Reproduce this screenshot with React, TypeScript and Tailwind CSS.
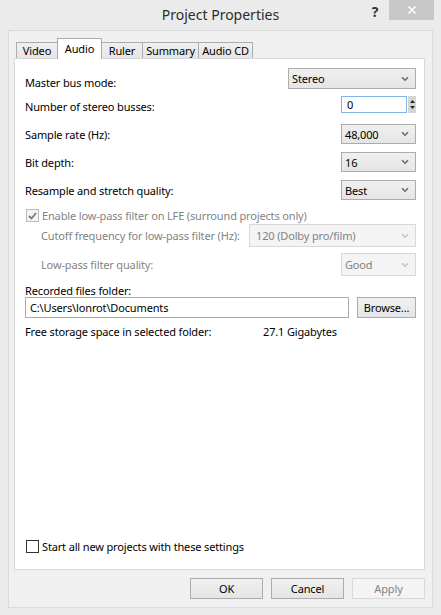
import React from 'react';

const tabs = [
  { label: 'Video', w: 'w-[42px]' },
  { label: 'Audio', w: 'w-[45px]', active: true },
  { label: 'Ruler', w: 'w-[42px]' },
  { label: 'Summary', w: 'w-[57px]' },
  { label: 'Audio CD', w: 'w-[55px]' },
];

function Chevron({ disabled }: { disabled?: boolean }) {
  return (
    <svg width="8" height="6" viewBox="0 0 8 6" className="shrink-0">
      <path
        d="M1 1.2 L4 4.2 L7 1.2"
        fill="none"
        stroke={disabled ? '#c4c4c4' : '#6b6b6b'}
        strokeWidth="1.6"
      />
    </svg>
  );
}

function Select({ value, className = '', disabled }: { value: string; className?: string; disabled?: boolean }) {
  return (
    <div
      className={`flex items-center justify-between pr-[6px] border ${
        disabled
          ? 'h-[23px] border-[#d9d9d9] bg-[#f4f4f4] text-[#838383]'
          : 'h-[20px] pl-[3px] border-[#acacac] bg-gradient-to-b from-[#f0f0f0] to-[#e5e5e5] text-black'
      } ${className}`}
    >
      <span>{value}</span>
      <Chevron disabled={disabled} />
    </div>
  );
}

function Button({ label, className = '', disabled }: { label: string; className?: string; disabled?: boolean }) {
  return (
    <div
      className={`flex items-center justify-center h-[21px] border ${
        disabled
          ? 'border-[#d9d9d9] bg-[#f4f4f4] text-[#838383]'
          : 'border-[#acacac] bg-gradient-to-b from-[#f0f0f0] to-[#e5e5e5] text-black'
      } ${className}`}
    >
      {label}
    </div>
  );
}

export default function App() {
  return (
    <div
      className="w-[441px] h-[615px] bg-[#ebebeb] flex flex-col text-[11px] tracking-[-0.15px] leading-none text-black overflow-hidden whitespace-nowrap"
      style={{ fontFamily: '"Noto Sans", "Open Sans", sans-serif' }}
    >
      {/* title bar */}
      <div className="relative h-[30px] shrink-0 flex justify-center">
        <div className="pt-[8px] text-[14px] tracking-[0px] text-[#2b2b2b]">Project Properties</div>
        <div className="absolute right-[7px] top-0 flex">
          <div className="w-[28px] pt-[5px] text-[14px] font-bold text-[#333] text-center">?</div>
          <div className="w-[45px] h-[20px] bg-[#c7c7c7] flex items-center justify-center">
            <svg width="10" height="10" viewBox="0 0 10 10">
              <path d="M1.5 1.5 L8.5 8.5 M8.5 1.5 L1.5 8.5" stroke="#fff" strokeWidth="1.6" />
            </svg>
          </div>
        </div>
      </div>

      {/* client area */}
      <div className="mx-[8px] h-[578px] border border-[#dadada] bg-[#f0f0f0] flex flex-col">
        <div className="pl-[5px] pr-[7px] pt-[7px] flex flex-col">
          {/* tabs */}
          <div className="flex items-end h-[20px] pl-[2px]">
            {tabs.map((t) =>
              t.active ? (
                <div
                  key={t.label}
                  className={`${t.w} h-[21px] -mb-px -ml-px relative z-10 border border-b-0 border-[#acacac] bg-white flex justify-center pt-[4px]`}
                >
                  {t.label}
                </div>
              ) : (
                <div
                  key={t.label}
                  className={`${t.w} h-[16px] border border-b-0 border-[#acacac] bg-gradient-to-b from-[#f0f0f0] to-[#e5e5e5] flex justify-center pt-[2px] -ml-px first:ml-0`}
                >
                  {t.label}
                </div>
              )
            )}
          </div>

          {/* panel */}
          <div className="h-[512px] border border-[#d9d9d9] bg-white pl-[10px] pr-[8px] flex flex-col">
            <div className="mt-[9px] flex justify-between items-center h-[21px]">
              <span className="pt-[7px]">Master bus mode:</span>
              <Select value="Stereo" className="w-[128px] h-[21px]" />
            </div>

            <div className="mt-[7px] flex justify-between items-center h-[17px]">
              <span className="pt-[3px]">Number of stereo busses:</span>
              <div className="flex h-[17px]">
                <div className="w-[66px] h-[17px] border border-[#7eb4ea] bg-white pl-[5px] flex items-center">0</div>
                <div className="w-[8px] h-[17px] bg-[#d6d6d6] flex flex-col items-center justify-center gap-[3px] ml-px">
                  <svg width="5" height="3" viewBox="0 0 5 3"><path d="M0 3 L2.5 0 L5 3 Z" fill="#222" /></svg>
                  <svg width="5" height="3" viewBox="0 0 5 3"><path d="M0 0 L2.5 3 L5 0 Z" fill="#222" /></svg>
                </div>
              </div>
            </div>

            <div className="mt-[11px] flex justify-between items-center h-[20px]">
              <span>Sample rate (Hz):</span>
              <Select value="48,000" className="w-[75px]" />
            </div>

            <div className="mt-[8px] flex justify-between items-center h-[20px]">
              <span>Bit depth:</span>
              <Select value="16" className="w-[75px]" />
            </div>

            <div className="mt-[8px] flex justify-between items-center h-[20px]">
              <span>Resample and stretch quality:</span>
              <Select value="Best" className="w-[75px]" />
            </div>

            <div className="mt-[9px] flex items-center h-[13px] pl-px">
              <div className="w-[13px] h-[13px] border border-[#bcbcbc] bg-[#f4f4f4] flex items-center justify-center">
                <svg width="9" height="8" viewBox="0 0 9 8">
                  <path d="M1 4 L3.5 6.5 L8 1" fill="none" stroke="#7a7a7a" strokeWidth="1.8" />
                </svg>
              </div>
              <span className="ml-[3px] text-[#838383]">Enable low-pass filter on LFE (surround projects only)</span>
            </div>

            <div className="mt-[2px] flex justify-between items-center h-[23px] pl-[16px]">
              <span className="text-[#838383]">Cutoff frequency for low-pass filter (Hz):</span>
              <Select value="120 (Dolby pro/film)" className="w-[167px] pl-[6px]" disabled />
            </div>

            <div className="mt-[6px] flex justify-between items-center h-[23px] pl-[16px]">
              <span className="text-[#838383]">Low-pass filter quality:</span>
              <Select value="Good" className="w-[75px] pl-[3px]" disabled />
            </div>

            <div className="mt-[9px] h-[12px]">Recorded files folder:</div>

            <div className="flex justify-between items-center h-[21px]">
              <div className="w-[324px] h-[21px] border border-[#acacac] bg-white pl-[4px] flex items-center">
                C:\Users\lonrot\Documents
              </div>
              <Button label="Browse..." className="w-[59px]" />
            </div>

            <div className="mt-[8px] flex h-[12px]">
              <span className="w-[238px]">Free storage space in selected folder:</span>
              <span>27.1 Gigabytes</span>
            </div>

            <div className="flex-1" />

            <div className="mb-[16px] flex items-center h-[13px] pl-px">
              <div className="w-[13px] h-[13px] border border-[#333] bg-white" />
              <span className="ml-[3px]">Start all new projects with these settings</span>
            </div>
          </div>

          {/* buttons */}
          <div className="mt-[8px] flex justify-end gap-[8px]">
            <Button label="OK" className="w-[73px]" />
            <Button label="Cancel" className="w-[73px]" />
            <Button label="Apply" className="w-[73px]" disabled />
          </div>
        </div>
      </div>
    </div>
  );
}
